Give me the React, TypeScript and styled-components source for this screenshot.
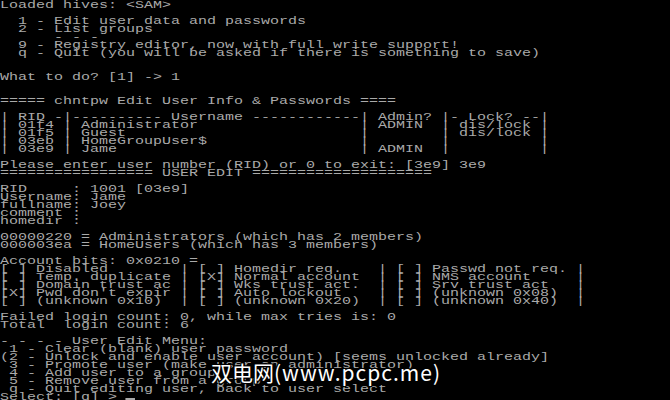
import React from 'react';
import styled, { createGlobalStyle } from 'styled-components';

const GlobalStyle = createGlobalStyle`
  html, body {
    margin: 0;
    padding: 0;
    background: #000;
    overflow: hidden;
  }
`;

const tableRow = (rid: string, name: string, admin: string, lock: string) =>
  `| ${rid} | ${name.padEnd(30)} | ${admin.padEnd(6)} | ${lock.padEnd(8)} |`;

const flagCell = (on: boolean, label: string) => `[${on ? 'X' : ' '}] ${label.padEnd(15)} | `;

const flagRow = (cells: [boolean, string][]) => cells.map(([on, label]) => flagCell(on, label)).join('').trimEnd();

// one entry per 8px text row, 50 rows
const lines: string[] = [
  'Loaded hives: <SAM>',
  '',
  '  1 - Edit user data and passwords',
  '  2 - List groups',
  '      - - -',
  '  9 - Registry editor, now with full write support!',
  '  q - Quit (you will be asked if there is something to save)',
  '',
  '',
  'What to do? [1] -> 1',
  '',
  '',
  '===== chntpw Edit User Info & Passwords ====',
  '',
  '| RID -|---------- Username ------------| Admin? |- Lock? --|',
  tableRow('01f4', 'Administrator', 'ADMIN', 'dis/lock'),
  tableRow('01f5', 'Guest', '', 'dis/lock'),
  tableRow('03eb', 'HomeGroupUser$', '', ''),
  tableRow('03e9', 'Jame', 'ADMIN', ''),
  '',
  'Please enter user number (RID) or 0 to exit: [3e9] 3e9',
  '================= USER EDIT ====================',
  '',
  'RID     : 1001 [03e9]',
  'Username: Jame',
  'fullname: Joey',
  'comment :',
  'homedir :',
  '',
  '00000220 = Administrators (which has 2 members)',
  '000003ea = HomeUsers (which has 3 members)',
  '',
  'Account bits: 0x0210 =',
  flagRow([[false, 'Disabled'], [false, 'Homedir req.'], [false, 'Passwd not req.']]),
  flagRow([[false, 'Temp. duplicate'], [true, 'Normal account'], [false, 'NMS account']]),
  flagRow([[false, 'Domain trust ac'], [false, 'Wks trust act.'], [false, 'Srv trust act']]),
  flagRow([[true, "Pwd don't expir"], [false, 'Auto lockout'], [false, '(unknown 0x08)']]),
  flagRow([[false, '(unknown 0x10)'], [false, '(unknown 0x20)'], [false, '(unknown 0x40)']]),
  '',
  'Failed login count: 0, while max tries is: 0',
  'Total  login count: 6',
  '',
  '- - - - User Edit Menu:',
  ' 1 - Clear (blank) user password',
  '(2 - Unlock and enable user account) [seems unlocked already]',
  ' 3 - Promote user (make user an administrator)',
  ' 4 - Add user to a group',
  ' 5 - Remove user from a group',
  ' q - Quit editing user, back to user select',
];

const Page = styled.div`
  position: relative;
  width: 670px;
  height: 400px;
  overflow: hidden;
  background: #000;
`;

/* 11px Liberation Mono is 6.6px per cell; stretched to the 9px VGA cell */
const Terminal = styled.div`
  display: flex;
  flex-direction: column;
  width: 560px;
  transform: scaleX(1.3634);
  transform-origin: 0 0;
  font-family: 'Liberation Mono', 'DejaVu Sans Mono', monospace;
  font-size: 11px;
  color: #aaaaaa;
`;

// 8px cell; the taller line box drops the glyphs 1px so caps sit in rows 0-7
const Line = styled.div`
  height: 8px;
  line-height: 10px;
  white-space: pre;
`;

const Cursor = styled.span`
  display: inline-block;
  width: 1ch;
  height: 8px;
  box-sizing: border-box;
  border-bottom: 2px solid #aaaaaa;
  vertical-align: top;
`;

const Watermark = styled.div`
  position: absolute;
  left: 211px;
  top: 359px;
  font-family: 'Noto Sans CJK SC', 'Noto Sans', sans-serif;
  font-size: 21px;
  line-height: 26px;
  color: #fff;
  white-space: nowrap;
  text-shadow: 0 0 2px #000, 1px 1px 0 #000, -1px -1px 0 #000, 1px -1px 0 #000, -1px 1px 0 #000;
`;

const Latin = styled.span`
  letter-spacing: 1px;
`;

const App: React.FC = () => {
  return (
    <Page>
      <GlobalStyle />
      <Terminal>
        {lines.map((text, i) => (
          <Line key={i}>{text}</Line>
        ))}
        <Line>
          {'Select: [q] > '}
          <Cursor />
        </Line>
      </Terminal>
      <Watermark>
        双电网<Latin>(www.pcpc.me)</Latin>
      </Watermark>
    </Page>
  );
};

export default App;
